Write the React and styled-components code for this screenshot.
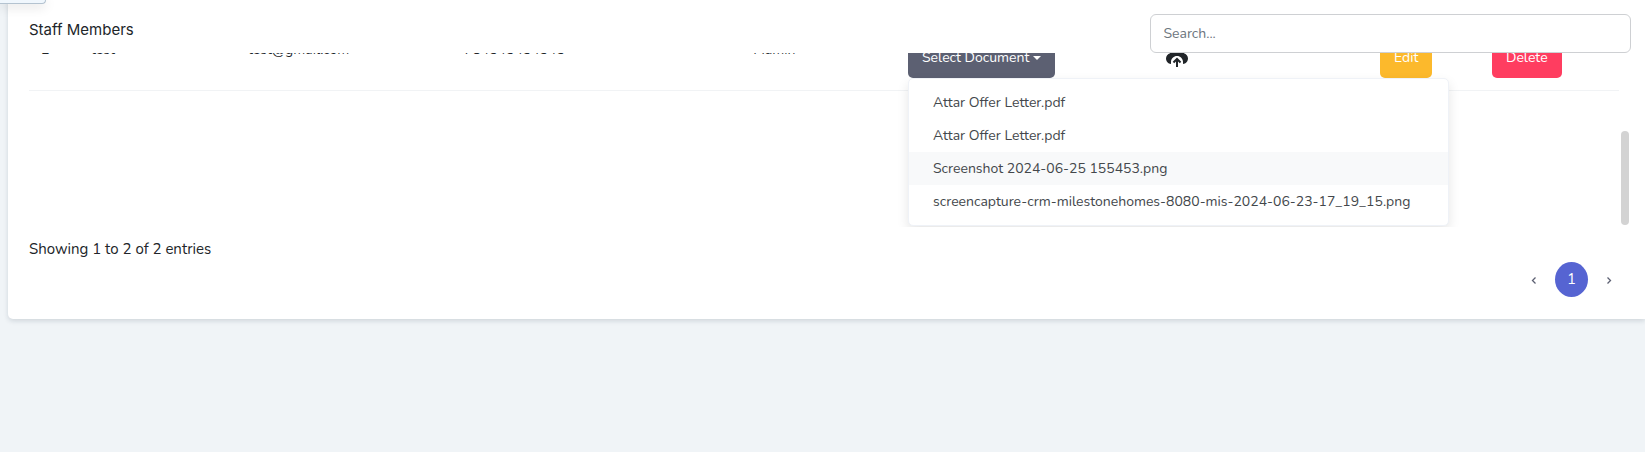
import React from "react";
import styled, { createGlobalStyle } from "styled-components";
import { RiUploadCloud2Fill } from "react-icons/ri";

const GlobalStyle = createGlobalStyle`
  *, *::before, *::after { box-sizing: border-box; }
  body {
    margin: 0;
    background: #f0f4f7;
    color: #212529;
    font-family: Nunito, "Open Sans", sans-serif;
    font-size: 14px;
    line-height: 21px;
  }
  button, input { font: inherit; }
`;

const Page = styled.main`
  position: relative;
  padding: 0 0 8px 8px;
  overflow: hidden;
`;

const CornerPanel = styled.div`
  position: absolute;
  top: 0;
  left: 0;
  width: 46px;
  height: 4px;
  background: #f0f7fd;
  border: solid #b4c3d0;
  border-width: 0 1px 1px 0;
  border-radius: 0 0 6px 0;
  box-shadow: 0 2px 12px rgba(0, 0, 0, 0.2);
`;

const Card = styled.section`
  background: #fff;
  border-radius: 0 0 0 5px;
  box-shadow: 0 2px 5px rgba(15, 34, 58, 0.14);
  padding: 0 14px 22px 21px;
`;

const Header = styled.header`
  display: flex;
  justify-content: space-between;
  align-items: flex-start;
  height: 53px;
  padding-top: 14px;
`;

const Title = styled.h1`
  margin: 4px 0 0;
  font: 400 15px/24px Inter, sans-serif;
`;

const Search = styled.input`
  position: relative;
  width: 30%;
  height: 39px;
  padding: 0 12px;
  border: 1px solid #ced0d3;
  border-radius: 6px;
  background: #fff;
  color: #212529;
  &::placeholder { color: #6c757d; opacity: 1; }
`;

const Scroller = styled.div`
  display: flex;
  height: 174px;
  margin-right: 2px;
  overflow: hidden;
`;

const Viewport = styled.div`
  flex: 1;
  display: flex;
  flex-direction: column;
  justify-content: flex-end;
  padding: 0 10px 136px 0;
`;

const Track = styled.div`
  display: flex;
  align-items: flex-end;
  width: 8px;
  margin-left: -8px;
  padding-bottom: 2px;
`;

const Thumb = styled.div`
  width: 8px;
  height: 94px;
  border-radius: 4px;
  background: #d3d3d3;
`;

const Table = styled.table`
  width: 100%;
  table-layout: fixed;
  border-collapse: separate;
  border-spacing: 0;
`;

const Cell = styled.td`
  height: 65px;
  padding: 13px 12px 12px;
  vertical-align: top;
  border-bottom: 1px solid #f1f3f5;
  white-space: nowrap;
`;

const tones = { dark: "#5c6072", amber: "#fcb92c", red: "#ff3d60" };

const Button = styled.button`
  display: inline-flex;
  align-items: center;
  justify-content: center;
  height: 39px;
  padding: 0 14px 2px;
  border: 0;
  border-radius: 5px;
  color: #fff;
  background: ${(p) => tones[p.$tone]};
`;

const Caret = styled.span`
  margin-left: 4px;
  border: 4px solid transparent;
  border-top-color: currentColor;
  border-bottom: 0;
`;

const IconButton = styled.button`
  display: block;
  padding: 6px 0 0;
  border: 0;
  background: none;
  color: #212529;
  svg { display: block; }
`;

const Dropdown = styled.div`
  position: relative;
`;

const Menu = styled.ul`
  position: absolute;
  top: 39px;
  left: 0;
  z-index: 1;
  min-width: 541px;
  margin: 0;
  padding: 7px 0;
  list-style: none;
  background: #fff;
  border: 1px solid #eff2f7;
  border-radius: 5px;
  box-shadow: 0 5px 12px rgba(0, 0, 0, 0.1);
`;

const MenuLink = styled.a`
  display: block;
  padding: 6px 24px;
  color: #43474b;
  text-decoration: none;
  background: ${(p) => (p.$active ? "#f8f9fa" : "transparent")};
`;

const Summary = styled.p`
  margin: 0;
  padding-top: 12px;
  font-size: 15px;
`;

const Pager = styled.nav`
  display: flex;
  justify-content: flex-end;
  align-items: center;
  gap: 4px;
  margin-top: 2px;
  padding-right: 5px;
`;

const PageButton = styled.button`
  display: flex;
  align-items: center;
  justify-content: center;
  width: ${(p) => (p.$current ? 33 : 34)}px;
  height: 35px;
  padding: 0;
  border: 0;
  border-radius: 50%;
  font-size: 15px;
  color: ${(p) => (p.$current ? "#fff" : "#5c6072")};
  background: ${(p) => (p.$current ? "#5664d2" : "transparent")};
`;

const Chevron = ({ d }) => (
  <svg width="6" height="10" viewBox="0 0 6 10" fill="none" stroke="currentColor" strokeWidth="1.3">
    <path d={d} />
  </svg>
);

const columns = [50, 157, 216, 290, 154, 257, 215, 112, 139];
const files = [
  "Attar Offer Letter.pdf",
  "Attar Offer Letter.pdf",
  "Screenshot 2024-06-25 155453.png",
  "screencapture-crm-milestonehomes-8080-mis-2024-06-23-17_19_15.png",
];
const details = ["2", "test", "test@gmail.com", "784545454545", "Admin"];

export default function App() {
  return (
    <Page>
      <GlobalStyle />
      <Card>
        <Header>
          <Title>Staff Members</Title>
          <Search type="search" placeholder="Search..." aria-label="Search" />
        </Header>
        <Scroller>
          <Viewport>
            <Table>
              <colgroup>
                {columns.map((width, i) => <col key={i} width={width} />)}
              </colgroup>
              <tbody>
                <tr>
                  {details.map((text) => <Cell key={text}>{text}</Cell>)}
                  <Cell>
                    <Dropdown>
                      <Button $tone="dark" aria-expanded="true">Select Document<Caret /></Button>
                      <Menu>
                        {files.map((name, i) => (
                          <li key={i}><MenuLink href="#" $active={i === 2}>{name}</MenuLink></li>
                        ))}
                      </Menu>
                    </Dropdown>
                  </Cell>
                  <Cell>
                    <IconButton aria-label="Upload"><RiUploadCloud2Fill size={24} /></IconButton>
                  </Cell>
                  <Cell><Button $tone="amber">Edit</Button></Cell>
                  <Cell><Button $tone="red">Delete</Button></Cell>
                </tr>
              </tbody>
            </Table>
          </Viewport>
          <Track><Thumb /></Track>
        </Scroller>
        <Summary>Showing 1 to 2 of 2 entries</Summary>
        <Pager aria-label="Pages">
          <PageButton aria-label="Previous"><Chevron d="M4.5 2.5L1.5 5.5L4.5 8.5" /></PageButton>
          <PageButton $current>1</PageButton>
          <PageButton aria-label="Next"><Chevron d="M1.5 2.5L4.5 5.5L1.5 8.5" /></PageButton>
        </Pager>
      </Card>
      <CornerPanel />
    </Page>
  );
}
